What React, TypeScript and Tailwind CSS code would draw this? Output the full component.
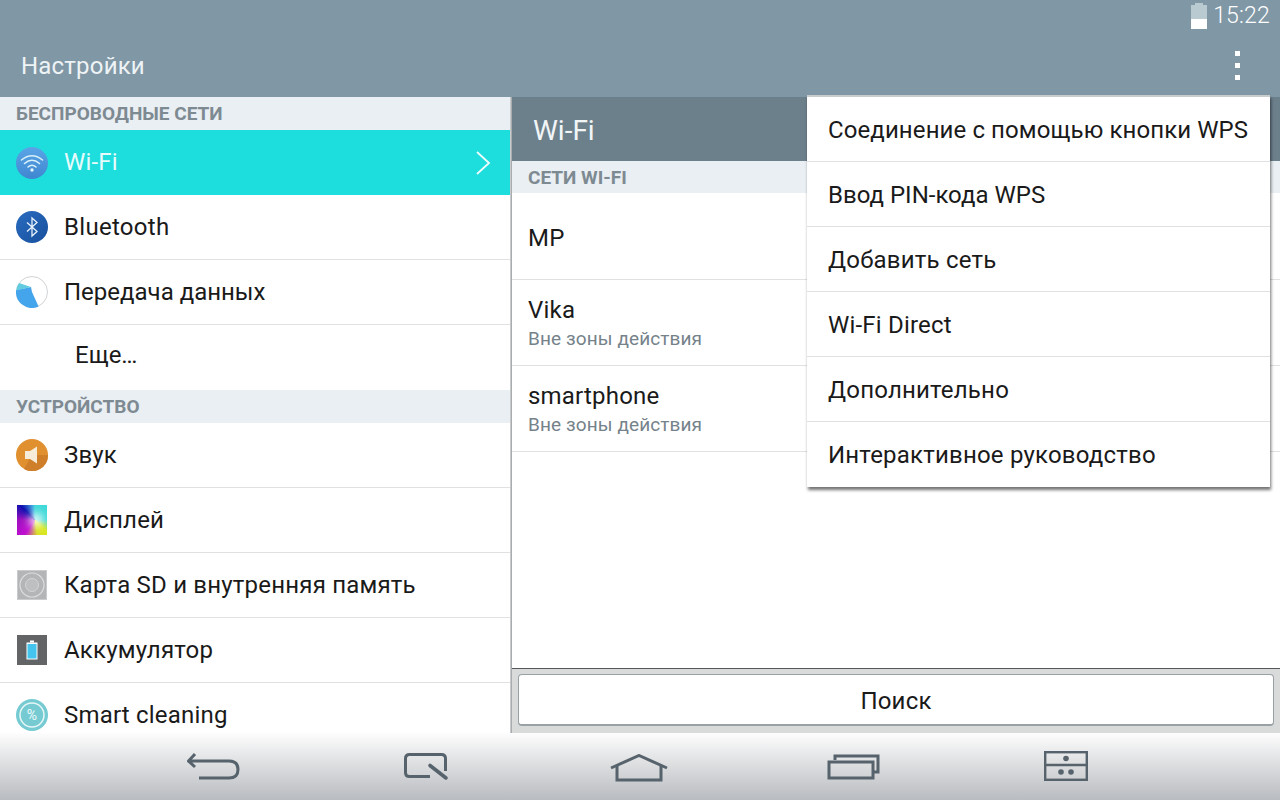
import React from "react";

const font = { fontFamily: "Roboto, sans-serif" };

function WifiIcon() {
  return (
    <svg width="32" height="32" viewBox="0 0 32 32">
      <defs>
        <linearGradient id="wg" x1="0" y1="0" x2="0" y2="1">
          <stop offset="0" stopColor="#5aa5e6" />
          <stop offset="1" stopColor="#3f86d0" />
        </linearGradient>
      </defs>
      <circle cx="16" cy="16" r="16" fill="url(#wg)" />
      <g fill="none" stroke="#d8f0fb" strokeWidth="1.6" strokeLinecap="round">
        <path d="M5.5 13 Q16 4.5 26.5 13" />
        <path d="M8.5 16.5 Q16 10 23.5 16.5" />
        <path d="M12 20 Q16 16.5 20 20" />
      </g>
      <circle cx="16" cy="23" r="1.7" fill="#e4f5fc" />
    </svg>
  );
}

function BluetoothIcon() {
  return (
    <svg width="32" height="32" viewBox="0 0 32 32">
      <defs>
        <linearGradient id="bg" x1="0" y1="0" x2="1" y2="1">
          <stop offset="0" stopColor="#2a6cc0" />
          <stop offset="1" stopColor="#174f9c" />
        </linearGradient>
      </defs>
      <circle cx="16" cy="16" r="16" fill="url(#bg)" />
      <path d="M11 11.5 L21 20.5 L16 25 V7 L21 11.5 L11 20.5" fill="none" stroke="#e8f2fb" strokeWidth="1.3" />
    </svg>
  );
}

function DataIcon() {
  return (
    <svg width="32" height="32" viewBox="0 0 32 32">
      <circle cx="16" cy="16" r="15.5" fill="#fff" stroke="#cfd3d6" />
      <path d="M16 16 L22.6 30.5 A16 16 0 0 1 0.1 14 L15 11 Z" fill="#45a5ec" />
      <path d="M15 11 L0.2 14.5 A16 16 0 0 1 3 7 Z" fill="#62cbe0" />
    </svg>
  );
}

function SoundIcon() {
  return (
    <svg width="32" height="32" viewBox="0 0 32 32">
      <circle cx="16" cy="16" r="16" fill="#e0902f" />
      <path d="M16 16 L32 16 A16 16 0 0 1 8 30 Z" fill="#cf7f2a" />
      <path d="M9 12 H14 L21 7.5 V24.5 L14 20 H9 Z" fill="#f7ecd9" />
    </svg>
  );
}

function DisplayIcon() {
  return (
    <div className="w-[30px] h-[30px] ml-px relative overflow-hidden bg-[#e020b0]">
      <div className="absolute inset-0 bg-[conic-gradient(from_0deg_at_60%_50%,#40d8d8_0deg,#40d8d8_90deg,#d8e820_135deg,#d8e020_170deg,#c010d0_215deg,#a010c0_270deg,#1010b0_315deg,#40a8e0_350deg,#40d8d8_360deg)]" />
      <div className="absolute left-[12px] top-[8px] w-[14px] h-[14px] rounded-full bg-white blur-[4px] opacity-90" />
    </div>
  );
}

function StorageIcon() {
  return (
    <svg width="30" height="30" viewBox="0 0 30 30" className="ml-px">
      <rect width="30" height="30" fill="#b3b5b6" />
      <rect x="0.5" y="0.5" width="29" height="29" fill="none" stroke="#c9cbcc" />
      <circle cx="15" cy="15" r="12" fill="none" stroke="#dcdddd" strokeWidth="1.2" />
      <circle cx="15" cy="15" r="6.5" fill="#bdbfc0" stroke="#d4d5d5" strokeWidth="1" />
    </svg>
  );
}

function BatteryIcon() {
  return (
    <svg width="30" height="30" viewBox="0 0 30 30" className="ml-px">
      <rect width="30" height="30" fill="#636466" />
      <rect x="13" y="5.5" width="4" height="2" fill="#fff" />
      <rect x="9.5" y="7.5" width="11" height="17" fill="#fff" />
      <rect x="10.5" y="9" width="9" height="14.5" fill="#45c4ee" />
    </svg>
  );
}

function CleanIcon() {
  return (
    <svg width="32" height="32" viewBox="0 0 32 32">
      <circle cx="16" cy="16" r="16" fill="#76cbd2" />
      <circle cx="16" cy="16" r="12" fill="#76cbd2" stroke="#e6f6f7" strokeWidth="1.5" />
      <text x="16" y="21" textAnchor="middle" fontSize="14" fill="#f0fafb" fontFamily="Roboto, sans-serif">%</text>
    </svg>
  );
}

function SectionHeader({ label, h = "h-[33px]" }: { label: string; h?: string }) {
  return (
    <div className={`${h} pl-4 pt-[2px] bg-[#e9eff3] flex items-center text-[19px] font-bold text-[#7e8a92] shrink-0`}>
      {label}
    </div>
  );
}

function Row({
  icon,
  label,
  active,
  tracking = "tracking-[0.2px]",
}: {
  icon?: React.ReactNode;
  label: string;
  active?: boolean;
  tracking?: string;
}) {
  return (
    <div
      className={`h-[65px] shrink-0 flex items-center pl-4 pr-4 ${
        active ? "bg-[#1ddddd]" : "bg-white border-b border-[#dfe1e2]"
      }`}
    >
      <div className="w-[48px] shrink-0">{icon}</div>
      <span
        className={`text-[24px] flex-1 ${tracking} ${active ? "text-[#e6fbfb] pb-[2px]" : "text-[#1a1a1a]"}`}
      >
        {label}
      </span>
      {active && (
        <svg width="16" height="24" viewBox="0 0 16 24" className="mr-[2px]">
          <path d="M1 1 L13 12 L1 23" fill="none" stroke="#f0fdfd" strokeWidth="1.8" />
        </svg>
      )}
    </div>
  );
}

function Network({ name, sub, h }: { name: string; sub?: string; h: string }) {
  return (
    <div className={`${h} shrink-0 pl-4 border-b border-[#dfe1e2] flex flex-col justify-center ${sub ? "pt-[1px]" : "pt-[3px]"}`}>
      <div className="text-[24px] leading-[30px] text-[#1a1a1a] tracking-[0.2px]">{name}</div>
      {sub && <div className="text-[19px] leading-[25px] pt-[1px] box-content text-[#75828a] tracking-[0.1px]">{sub}</div>}
    </div>
  );
}

const menuItems = [
  { t: "Соединение с помощью кнопки WPS", c: "tracking-[0.1px]" },
  { t: "Ввод PIN-кода WPS", c: "tracking-[0px]" },
  { t: "Добавить сеть", c: "tracking-[0.2px]" },
  { t: "Wi-Fi Direct", c: "tracking-[0.2px]" },
  { t: "Дополнительно", c: "tracking-[0.2px]" },
  { t: "Интерактивное руководство", c: "tracking-[0.2px]" },
];

export default function App() {
  return (
    <div className="w-[1280px] h-[800px] overflow-hidden flex flex-col bg-white relative" style={font}>
      {/* Top bar */}
      <div className="h-[97px] shrink-0 bg-[#8097a5] flex flex-col">
        <div className="h-[32px] shrink-0 flex items-center justify-end pr-[10px] gap-[6px]">
          <div className="flex flex-col items-center">
            <div className="w-[8px] h-[2px] bg-[#b9cad1]" />
            <div className="w-[16px] h-[24px] flex flex-col">
              <div className="h-[14px] bg-[#b9cad1]" />
              <div className="h-[10px] bg-white" />
            </div>
          </div>
          <span className="text-[23px] font-light text-white tracking-[0.2px]">15:22</span>
        </div>
        <div className="flex-1 flex items-center justify-between pl-[21px] pr-[40px] pt-[2px]">
          <span className="text-[24px] text-[#eef3f5] tracking-[0.2px]">Настройки</span>
          <div className="flex flex-col gap-[7px]">
            <div className="w-[5px] h-[5px] bg-white" />
            <div className="w-[5px] h-[5px] bg-white" />
            <div className="w-[5px] h-[5px] bg-white" />
          </div>
        </div>
      </div>

      {/* Body */}
      <div className="flex-1 min-h-0 flex">
        {/* Left */}
        <div className="w-[510px] shrink-0 flex flex-col overflow-hidden">
          <SectionHeader label="БЕСПРОВОДНЫЕ СЕТИ" />
          <Row active icon={<WifiIcon />} label="Wi-Fi" />
          <Row icon={<BluetoothIcon />} label="Bluetooth" tracking="tracking-[0.3px]" />
          <Row icon={<DataIcon />} label="Передача данных" tracking="tracking-[0px]" />
          <div className="h-[65px] shrink-0 flex items-center pl-[75px] pb-[6px] text-[24px] text-[#1a1a1a]">Еще…</div>
          <SectionHeader label="УСТРОЙСТВО" />
          <Row icon={<SoundIcon />} label="Звук" />
          <Row icon={<DisplayIcon />} label="Дисплей" />
          <Row icon={<StorageIcon />} label="Карта SD и внутренняя память" />
          <Row icon={<BatteryIcon />} label="Аккумулятор" />
          <Row icon={<CleanIcon />} label="Smart cleaning" />
        </div>

        {/* Divider */}
        <div className="w-[2px] shrink-0 bg-gradient-to-r from-[#d8dadb] to-[#9a9d9f]" />

        {/* Right */}
        <div className="flex-1 flex flex-col min-w-0">
          <div className="h-[64px] shrink-0 bg-[#6c808c] flex items-center pl-[21px] pt-[3px] text-[28px] text-[#f2f5f6]">Wi-Fi</div>
          <SectionHeader label="СЕТИ WI-FI" h="h-[32px]" />
          <Network name="MP" h="h-[87px]" />
          <Network name="Vika" sub="Вне зоны действия" h="h-[86px]" />
          <Network name="smartphone" sub="Вне зоны действия" h="h-[86px]" />
          <div className="flex-1" />
          <div className="h-[65px] shrink-0 border-t border-[#55585a] bg-[#d9dbdb] px-[6px] pt-[5px]">
            <div className="h-[52px] pt-[2px] rounded-[4px] bg-white border border-[#9aa1a4] border-b-2 flex items-center justify-center text-[24px] text-[#1a1a1a] tracking-[0.2px]">
              Поиск
            </div>
          </div>
        </div>
      </div>

      {/* Nav bar */}
      <div className="h-[67px] shrink-0 bg-gradient-to-b from-[#fdfdfd] to-[#b9bcc0] relative">
        <div className="absolute left-[187px] top-[19px]">
          <svg width="54" height="32" viewBox="0 0 54 32">
            <path d="M8 2 L1.5 9 L8 15 M2 9 H42 Q51 9 51 17.5 Q51 26 42 26 H12" fill="none" stroke="#57636c" strokeWidth="3" />
          </svg>
        </div>
        <div className="absolute left-[403px] top-[20px]">
          <svg width="46" height="30" viewBox="0 0 46 30">
            <path d="M27 23.5 H6.5 Q2.5 23.5 2.5 19.5 V5.5 Q2.5 1.5 6.5 1.5 H38.5 Q42.5 1.5 42.5 5.5 V18" fill="none" stroke="#57636c" strokeWidth="3" />
            <path d="M27 12.5 L43 25" fill="none" stroke="#57636c" strokeWidth="3.6" strokeLinecap="round" />
          </svg>
        </div>
        <div className="absolute left-[610px] top-[21px]">
          <svg width="58" height="28" viewBox="0 0 58 28">
            <path d="M1 14 L29 1.5 L57 14" fill="none" stroke="#57636c" strokeWidth="3" />
            <path d="M7 12 V26 H51 V12" fill="none" stroke="#57636c" strokeWidth="3" />
          </svg>
        </div>
        <div className="absolute left-[827px] top-[21px]">
          <svg width="54" height="26" viewBox="0 0 54 26">
            <path d="M8 6 V2 H51 V18 H47" fill="none" stroke="#57636c" strokeWidth="3" />
            <rect x="2" y="8" width="44" height="16" fill="none" stroke="#57636c" strokeWidth="3" />
          </svg>
        </div>
        <div className="absolute left-[1044px] top-[18px]">
          <svg width="44" height="30" viewBox="0 0 44 30">
            <rect x="1.2" y="1.2" width="41.6" height="27.6" fill="none" stroke="#57636c" strokeWidth="2.4" />
            <path d="M1 14 H43" stroke="#57636c" strokeWidth="2.6" />
            <circle cx="22" cy="7.5" r="2.8" fill="#57636c" />
            <circle cx="17" cy="21" r="2.8" fill="#57636c" />
            <circle cx="27" cy="21" r="2.8" fill="#57636c" />
          </svg>
        </div>
      </div>

      {/* Overflow menu */}
      <div className="absolute left-[807px] top-[95px] w-[463px] bg-white border-t-2 border-[#c9cccc] shadow-[1px_3px_3px_rgba(0,0,0,0.55)] flex flex-col">
        {menuItems.map((m, i) => (
          <div
            key={m.t}
            className={`h-[65px] flex items-center pl-[21px] text-[24px] text-[#1a1a1a] ${m.c} ${
              i < menuItems.length - 1 ? "border-b border-[#dfe1e2] pt-[1px]" : ""
            }`}
          >
            {m.t}
          </div>
        ))}
      </div>
    </div>
  );
}
